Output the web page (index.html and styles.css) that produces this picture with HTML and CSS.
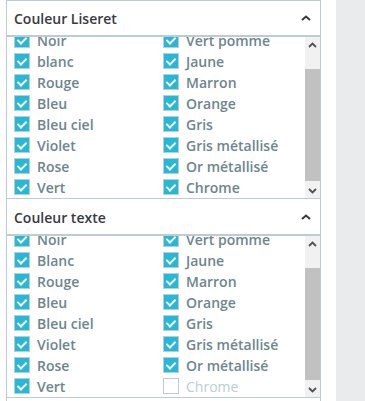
FILE: index.html
```html
<!DOCTYPE html>
<html lang="fr">
<head>
<meta charset="utf-8">
<link rel="stylesheet" href="styles.css">
</head>
<body>
<div class="page">
  <div class="main">
    <section class="panel first">
      <div class="head">
        <span class="title">Couleur Liseret</span>
        <svg class="caret" width="10" height="6" viewBox="0 0 10 6"><polyline points="1,5 5,1.5 9,5" fill="none" stroke="#363a41" stroke-width="2"/></svg>
      </div>
      <div class="list">
        <div class="viewport">
          <div class="grid">
            <label class="item"><span class="box on"></span>Noir</label>
            <label class="item"><span class="box on"></span>Vert pomme</label>
            <label class="item"><span class="box on"></span>blanc</label>
            <label class="item"><span class="box on"></span>Jaune</label>
            <label class="item"><span class="box on"></span>Rouge</label>
            <label class="item"><span class="box on"></span>Marron</label>
            <label class="item"><span class="box on"></span>Bleu</label>
            <label class="item"><span class="box on"></span>Orange</label>
            <label class="item"><span class="box on"></span>Bleu ciel</label>
            <label class="item"><span class="box on"></span>Gris</label>
            <label class="item"><span class="box on"></span>Violet</label>
            <label class="item"><span class="box on"></span>Gris métallisé</label>
            <label class="item"><span class="box on"></span>Rose</label>
            <label class="item"><span class="box on"></span>Or métallisé</label>
            <label class="item"><span class="box on"></span>Vert</label>
            <label class="item"><span class="box on"></span>Chrome</label>
          </div>
        </div>
        <div class="sb">
          <span class="sb-btn"><svg width="9" height="6" viewBox="0 0 9 6"><polyline points="1,5 4.5,1.5 8,5" fill="none" stroke="#505050" stroke-width="1.8"/></svg></span>
          <span class="sb-track"><span class="sb-thumb"></span></span>
          <span class="sb-btn"><svg width="9" height="6" viewBox="0 0 9 6"><polyline points="1,1 4.5,4.5 8,1" fill="none" stroke="#505050" stroke-width="1.8"/></svg></span>
        </div>
      </div>
    </section>
    <section class="panel second">
      <div class="head">
        <span class="title">Couleur texte</span>
        <svg class="caret" width="10" height="6" viewBox="0 0 10 6"><polyline points="1,5 5,1.5 9,5" fill="none" stroke="#363a41" stroke-width="2"/></svg>
      </div>
      <div class="list">
        <div class="viewport">
          <div class="grid">
            <label class="item"><span class="box on"></span>Noir</label>
            <label class="item"><span class="box on"></span>Vert pomme</label>
            <label class="item"><span class="box on"></span>Blanc</label>
            <label class="item"><span class="box on"></span>Jaune</label>
            <label class="item"><span class="box on"></span>Rouge</label>
            <label class="item"><span class="box on"></span>Marron</label>
            <label class="item"><span class="box on"></span>Bleu</label>
            <label class="item"><span class="box on"></span>Orange</label>
            <label class="item"><span class="box on"></span>Bleu ciel</label>
            <label class="item"><span class="box on"></span>Gris</label>
            <label class="item"><span class="box on"></span>Violet</label>
            <label class="item"><span class="box on"></span>Gris métallisé</label>
            <label class="item"><span class="box on"></span>Rose</label>
            <label class="item"><span class="box on"></span>Or métallisé</label>
            <label class="item"><span class="box on"></span>Vert</label>
            <label class="item disabled"><span class="box"></span>Chrome</label>
          </div>
        </div>
        <div class="sb">
          <span class="sb-btn"><svg width="9" height="6" viewBox="0 0 9 6"><polyline points="1,5 4.5,1.5 8,5" fill="none" stroke="#505050" stroke-width="1.8"/></svg></span>
          <span class="sb-track"><span class="sb-thumb"></span></span>
          <span class="sb-btn"><svg width="9" height="6" viewBox="0 0 9 6"><polyline points="1,1 4.5,4.5 8,1" fill="none" stroke="#505050" stroke-width="1.8"/></svg></span>
        </div>
      </div>
    </section>
    <div class="next"></div>
  </div>
  <div class="side"></div>
</div>
</body>
</html>
```
FILE: styles.css
```css
* { box-sizing: border-box; }
html, body { margin: 0; padding: 0; }
body {
  font-family: "Open Sans", "Noto Sans", sans-serif;
  background: #ffffff;
  width: 365px;
  height: 401px;
  overflow: hidden;
}
.page {
  display: flex;
  height: 401px;
}
.main {
  width: 336px;
  padding-left: 6px;
  background: #ffffff;
}
.side {
  flex: 1;
  background: #eaebed;
}
.panel {
  width: 315px;
  border-left: 1px solid #bbcdd2;
  border-right: 1px solid #bbcdd2;
}
.panel.first {
  border-top: 1px solid #bbcdd2;
}
.head {
  height: 36px;
  display: flex;
  align-items: center;
  justify-content: space-between;
  padding: 0 9px 0 7px;
  border-bottom: 2px solid #bbcdd2;
}
.panel.second .head {
  height: 37px;
  padding-top: 1px;
}
.title {
  font-size: 14px;
  font-weight: 600;
  color: #363a41;
}
.caret { display: block; margin-top: -1px; }
.list {
  height: 162px;
  display: flex;
  border-bottom: 1px solid #bbcdd2;
}
.viewport {
  flex: 1;
  display: flex;
  flex-direction: column;
  justify-content: flex-end;
  overflow: hidden;
}
.grid {
  flex: none;
  display: grid;
  grid-template-columns: 149px 1fr;
  grid-auto-rows: 21px;
  padding: 0 0 0 7px;
}
.item {
  display: flex;
  align-items: center;
  gap: 7px;
  font-size: 14px;
  font-weight: 600;
  color: #6c868e;
  white-space: nowrap;
}
.item.disabled { color: #bbcdd2; font-weight: 400; }
.box {
  position: relative;
  flex: none;
  width: 16px;
  height: 16px;
  border: 1px solid #bbcdd2;
  background: #ffffff;
  margin-top: -2px;
}
.box.on {
  background: #25b9d7;
}
.box.on::after {
  content: "";
  position: absolute;
  left: 4px;
  top: 2px;
  width: 4px;
  height: 7px;
  border-right: 2px solid #ffffff;
  border-bottom: 2px solid #ffffff;
  transform: rotate(45deg);
}
.sb {
  width: 15px;
  flex: none;
  display: flex;
  flex-direction: column;
  background: #f1f1f1;
}
.sb-btn {
  height: 15px;
  display: flex;
  align-items: center;
  justify-content: center;
}
.sb-track {
  flex: 1;
  display: flex;
  flex-direction: column;
  justify-content: flex-end;
  padding: 0 0 2px;
}
.sb-thumb {
  height: 112px;
  background: #c1c1c1;
}
.next {
  width: 315px;
  height: 10px;
  border-left: 1px solid #bbcdd2;
  border-right: 1px solid #bbcdd2;
}
```
